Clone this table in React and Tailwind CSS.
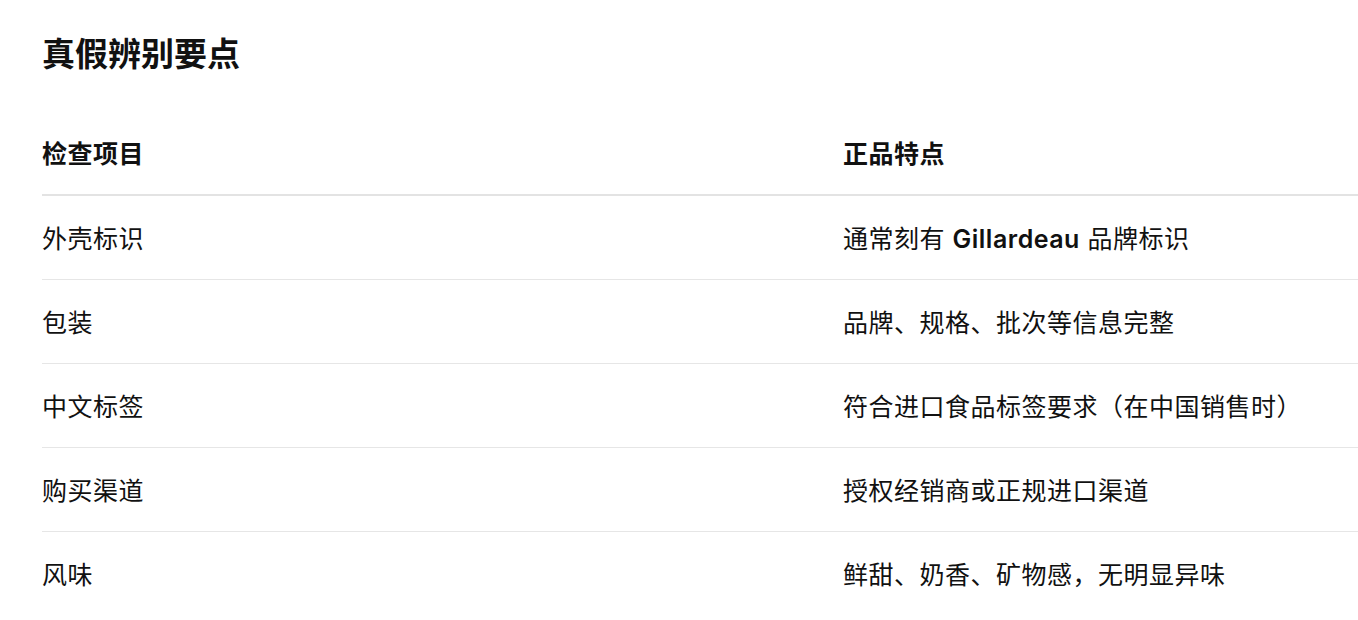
import React from "react";

const rows = [
  ["外壳标识", <>通常刻有 <span className="font-semibold">Gillardeau</span> 品牌标识</>],
  ["包装", "品牌、规格、批次等信息完整"],
  ["中文标签", "符合进口食品标签要求（在中国销售时）"],
  ["购买渠道", "授权经销商或正规进口渠道"],
  ["风味", "鲜甜、奶香、矿物感，无明显异味"],
];

const App = () => {
  return (
    <div
      className="min-h-screen bg-white pl-[42px] pt-[34px] text-[#111]"
      style={{ fontFamily: '"Inter", "Noto Sans CJK SC", sans-serif' }}
    >
      {/* Title */}
      <h1 className="text-[33px] leading-[40px] font-bold">真假辨别要点</h1>

      {/* Table */}
      <div className="mt-[38px] w-full">
        <div className="flex h-[84px] items-center border-b-2 border-[#e3e3e3] pt-[4px] text-[25px] tracking-[0.5px] font-bold">
          <div className="w-[801px] shrink-0">检查项目</div>
          <div className="flex-1">正品特点</div>
        </div>
        {rows.map(([item, feature], idx) => (
          <div
            key={idx}
            className={`flex h-[84px] items-center pt-[4px] text-[25px] tracking-[0.5px] ${
              idx < rows.length - 1 ? "border-b border-[#e6e6e6]" : ""
            }`}
          >
            <div className="w-[801px] shrink-0">{item}</div>
            <div className="flex-1">{feature}</div>
          </div>
        ))}
      </div>
    </div>
  );
};

export default App;
